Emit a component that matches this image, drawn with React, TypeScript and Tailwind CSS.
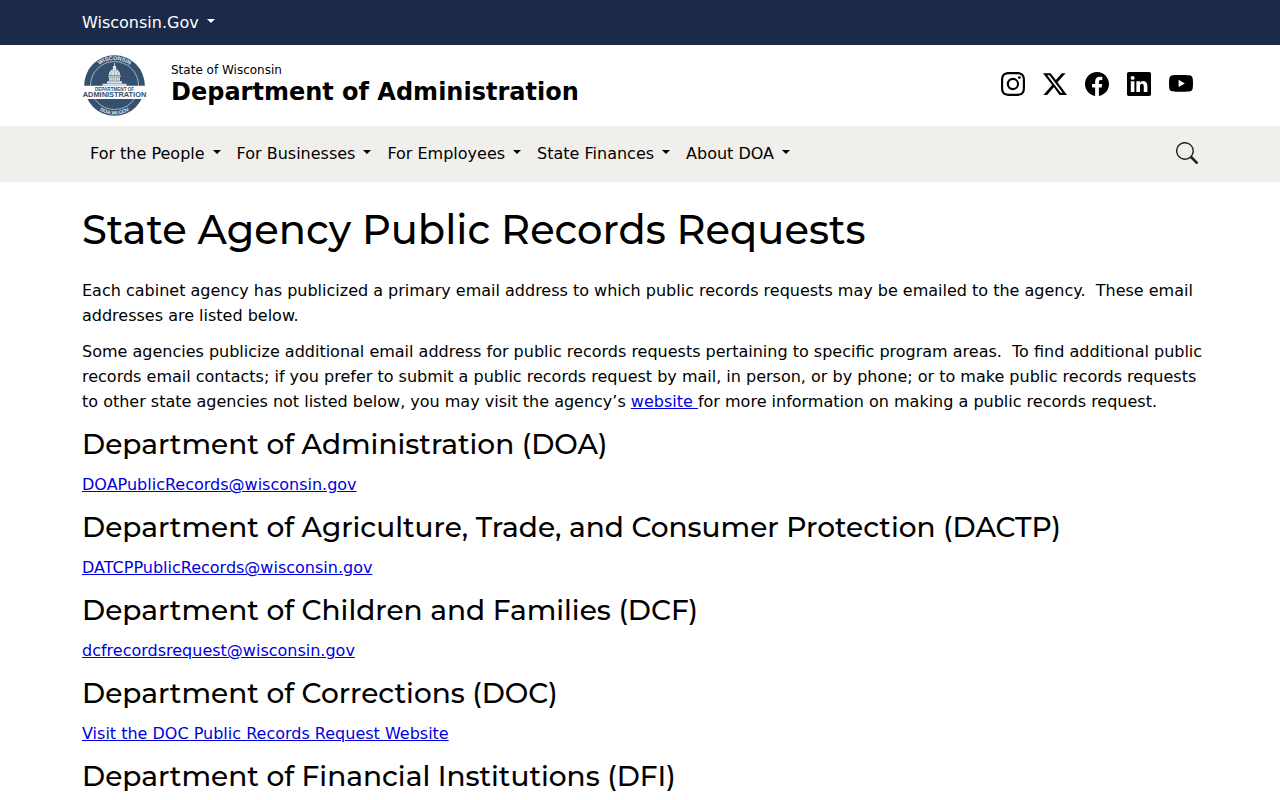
import type { ReactNode } from "react";
import {
  BsFacebook,
  BsInstagram,
  BsLinkedin,
  BsSearch,
  BsTwitterX,
  BsYoutube,
} from "react-icons/bs";

// ─── Data ─────────────────────────────────────────────────────────────────────

const navItems = [
  "For the People",
  "For Businesses",
  "For Employees",
  "State Finances",
  "About DOA",
];

const socialLinks = [
  { label: "Instagram", icon: BsInstagram },
  { label: "X", icon: BsTwitterX },
  { label: "Facebook", icon: BsFacebook },
  { label: "LinkedIn", icon: BsLinkedin },
  { label: "YouTube", icon: BsYoutube },
];

const agencies = [
  {
    name: "Department of Administration (DOA)",
    link: "DOAPublicRecords@wisconsin.gov",
    href: "mailto:DOAPublicRecords@wisconsin.gov",
  },
  {
    name: "Department of Agriculture, Trade, and Consumer Protection (DACTP)",
    link: "DATCPPublicRecords@wisconsin.gov",
    href: "mailto:DATCPPublicRecords@wisconsin.gov",
  },
  {
    name: "Department of Children and Families (DCF)",
    link: "dcfrecordsrequest@wisconsin.gov",
    href: "mailto:dcfrecordsrequest@wisconsin.gov",
  },
  {
    name: "Department of Corrections (DOC)",
    link: "Visit the DOC Public Records Request Website",
    href: "#doc",
  },
  { name: "Department of Financial Institutions (DFI)" },
];

// ─── Shared pieces ────────────────────────────────────────────────────────────

function Container({ children }: { children: ReactNode }) {
  return <div className="mx-auto w-full max-w-[1140px] px-3">{children}</div>;
}

function Caret() {
  return (
    <span
      aria-hidden="true"
      className="mb-1 border-x-4 border-t-4 border-x-transparent border-t-current"
    />
  );
}

function Seal() {
  return (
    <svg
      viewBox="0 0 65 62"
      className="h-[62px] w-[65px] shrink-0"
      role="img"
      aria-label="Wisconsin Department of Administration"
    >
      <defs>
        <path id="seal-top" d="M7 30.5a25.5 25.5 0 0 1 51 0" />
        <path id="seal-bottom" d="M3.5 30.5a29 29 0 0 0 58 0" />
      </defs>
      <circle cx="32.5" cy="30.5" r="30.3" fill="#34506c" />
      <circle
        cx="32.5"
        cy="30.5"
        r="24"
        fill="#34506c"
        stroke="#c3cdd6"
        strokeWidth="0.8"
      />
      <g
        fill="#e8edf1"
        fontFamily="'Liberation Sans', sans-serif"
        fontWeight="700"
        textAnchor="middle"
      >
        <text fontSize="5.6">
          <textPath href="#seal-top" startOffset="50%">
            WISCONSIN
          </textPath>
        </text>
        <text fontSize="5">
          <textPath href="#seal-bottom" startOffset="50%">
            DOA.WI.GOV
          </textPath>
        </text>
      </g>

      {/* Capitol dome */}
      <g fill="#dbe2e8">
        <path d="M32.1 8h.8v4h-.8z" />
        <path d="M30.9 11h3.2v3.4h-3.2z" />
        <path d="M26.7 20.5c.2-4.2 2.4-6.6 5.8-6.6s5.6 2.4 5.8 6.6z" />
        <path d="M26 20.9h13v.9H26zM27 22.2h11v3.6H27zM25 26.2h15v2.2H25z" />
        <path d="M20.5 28.7h24v2.1h-24z" />
      </g>
      <path
        d="M29.2 20.2c.2-2.5.8-4.4 1.6-5.2M32.5 14.8v5.4M35.8 20.2c-.2-2.5-.8-4.4-1.6-5.2M28.7 22.2v3.6M30.6 22.2v3.6M32.5 22.2v3.6M34.4 22.2v3.6M36.3 22.2v3.6"
        fill="none"
        stroke="#7b90a5"
        strokeWidth="0.5"
      />

      <path d="M0 30.8h65v13.2H0z" fill="#fff" />
      <g
        fill="#34506c"
        fontFamily="'Liberation Sans', sans-serif"
        textAnchor="middle"
      >
        <text x="32.5" y="35.6" fontSize="4.6" fontWeight="700">
          DEPARTMENT OF
        </text>
        <text x="32.5" y="42.3" fontSize="7.4" fontWeight="700">
          ADMINISTRATION
        </text>
      </g>
    </svg>
  );
}

// ─── Page ─────────────────────────────────────────────────────────────────────

export default function App() {
  return (
    <div className="min-h-screen bg-white font-['DejaVu_Sans',sans-serif] text-base text-black">
      <div className="bg-[#1b2a49] text-white">
        <Container>
          <button type="button" className="flex h-[45px] items-center gap-2">
            Wisconsin.Gov
            <Caret />
          </button>
        </Container>
      </div>

      <header>
        <Container>
          <div className="flex items-center justify-between pt-[10px] pb-[9px]">
            <a href="#home" className="flex items-center gap-6">
              <Seal />
              <span className="flex flex-col pb-1">
                <span className="text-xs leading-4">State of Wisconsin</span>
                <span className="text-2xl leading-7 font-bold">
                  Department of Administration
                </span>
              </span>
            </a>
            <ul className="flex gap-[18px] pr-[5px] pb-1">
              {socialLinks.map(({ label, icon: Icon }) => (
                <li key={label}>
                  <a href={`#${label.toLowerCase()}`} aria-label={label}>
                    <Icon className="size-6" aria-hidden="true" />
                  </a>
                </li>
              ))}
            </ul>
          </div>
        </Container>
      </header>

      <nav className="bg-[#f1efeb]">
        <Container>
          <div className="flex h-14 items-center justify-between">
            <ul className="flex">
              {navItems.map((item) => (
                <li key={item}>
                  <button
                    type="button"
                    className="flex items-center gap-2 px-2"
                  >
                    {item}
                    <Caret />
                  </button>
                </li>
              ))}
            </ul>
            <button type="button" aria-label="Search" className="pb-0.5">
              <BsSearch
                className="size-[22px] text-[#212529]"
                aria-hidden="true"
              />
            </button>
          </div>
        </Container>
      </nav>

      <main>
        <Container>
          <h1 className="mt-6 mb-6 font-[Montserrat,Inter,sans-serif] text-[40px] leading-12 font-medium">
            State Agency Public Records Requests
          </h1>
          <p className="-mr-2 mb-[11px] leading-[25px]">
            Each cabinet agency has publicized a primary email address to which
            public records requests may be emailed to the agency.&nbsp; These
            email addresses are listed below.
          </p>
          <p className="-mr-2 mb-[11px] leading-[25px]">
            Some agencies publicize additional email address for public records
            requests pertaining to specific program areas.&nbsp; To find
            additional public records email contacts; if you prefer to submit a
            public records request by mail, in person, or by phone; or to make
            public records requests to other state agencies not listed below,
            you may visit the agency’s{" "}
            <a href="#website" className="text-[#0000dd] underline">
              website{" "}
            </a>
            for more information on making a public records request.
          </p>
          {agencies.map(({ name, link, href }) => (
            <section key={name}>
              <h2 className="mb-[9px] font-[Montserrat,Inter,sans-serif] text-[28px] leading-[38px] font-medium">
                {name}
              </h2>
              {link && (
                <p className="mb-[11px] leading-[25px]">
                  <a href={href} className="text-[#0000dd] underline">
                    {link}
                  </a>
                </p>
              )}
            </section>
          ))}
        </Container>
      </main>
    </div>
  );
}
